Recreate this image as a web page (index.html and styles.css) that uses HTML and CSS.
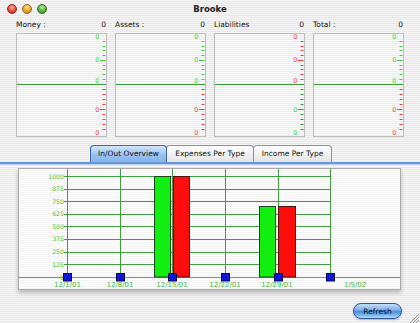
FILE: index.html
```html
<!DOCTYPE html>
<html>
<head>
	<title>Brooke</title>
	<link rel="stylesheet" href="styles.css">
</head>
<body>
	<div class="window">
		<div class="titlebar">
			<div class="lights">
				<span class="light close"></span>
				<span class="light min"></span>
				<span class="light zoom"></span>
			</div>
			<div class="title">Brooke</div>
			<div></div>
		</div>

		<div class="summary">
			<div class="account">
				<div class="account-head"><span>Money :</span><span>0</span></div>
				<div class="gauge">
					<svg viewBox="0 0 89 102" width="89" height="102">
						<line class="midline" x1="0" y1="50.5" x2="89" y2="50.5"/>
						<path class="tick-pos" d="M85.5 7.5h3M85.5 12.5h3M85.5 16.5h3M85.5 21.5h3M83 26.5h5.5M85.5 31.5h3M85.5 35.5h3M85.5 40.5h3M85.5 45.5h3"/>
						<path class="tick-neg" d="M85.5 55.5h3M85.5 60.5h3M85.5 65.5h3M85.5 70.5h3M83 75.5h5.5M85.5 80.5h3M85.5 85.5h3M85.5 90.5h3M85.5 95.5h3"/>
						<text class="num-pos" x="82.5" y="5">0</text>
						<text class="num-pos" x="82.5" y="28">0</text>
						<text class="num-pos" x="82.5" y="49.3">0</text>
						<text class="num-neg" x="82.5" y="77.7">0</text>
						<text class="num-neg" x="82.5" y="100.5">0</text>
					</svg>
				</div>
			</div>
			<div class="account">
				<div class="account-head"><span>Assets :</span><span>0</span></div>
				<div class="gauge">
					<svg viewBox="0 0 89 102" width="89" height="102">
						<line class="midline" x1="0" y1="50.5" x2="89" y2="50.5"/>
						<path class="tick-pos" d="M85.5 7.5h3M85.5 12.5h3M85.5 16.5h3M85.5 21.5h3M83 26.5h5.5M85.5 31.5h3M85.5 35.5h3M85.5 40.5h3M85.5 45.5h3"/>
						<path class="tick-neg" d="M85.5 55.5h3M85.5 60.5h3M85.5 65.5h3M85.5 70.5h3M83 75.5h5.5M85.5 80.5h3M85.5 85.5h3M85.5 90.5h3M85.5 95.5h3"/>
						<text class="num-pos" x="82.5" y="5">0</text>
						<text class="num-pos" x="82.5" y="28">0</text>
						<text class="num-pos" x="82.5" y="49.3">0</text>
						<text class="num-neg" x="82.5" y="77.7">0</text>
						<text class="num-neg" x="82.5" y="100.5">0</text>
					</svg>
				</div>
			</div>
			<div class="account">
				<div class="account-head"><span>Liabilities</span><span>0</span></div>
				<div class="gauge">
					<svg viewBox="0 0 89 102" width="89" height="102">
						<line class="midline" x1="0" y1="50.5" x2="89" y2="50.5"/>
						<path class="tick-neg" d="M85.5 7.5h3M85.5 12.5h3M85.5 16.5h3M85.5 21.5h3M83 26.5h5.5M85.5 31.5h3M85.5 35.5h3M85.5 40.5h3M85.5 45.5h3"/>
						<path class="tick-dark" d="M85.5 55.5h3M85.5 60.5h3M85.5 65.5h3M85.5 70.5h3M83 75.5h5.5M85.5 80.5h3M85.5 85.5h3M85.5 90.5h3M85.5 95.5h3"/>
						<text class="num-neg" x="82.5" y="5">0</text>
						<text class="num-neg" x="82.5" y="28">0</text>
						<text class="num-neg" x="82.5" y="49.3">0</text>
						<text class="num-pos" x="82.5" y="77.7">0</text>
						<text class="num-pos" x="82.5" y="100.5">0</text>
					</svg>
				</div>
			</div>
			<div class="account">
				<div class="account-head"><span>Total :</span><span>0</span></div>
				<div class="gauge">
					<svg viewBox="0 0 89 102" width="89" height="102">
						<line class="midline" x1="0" y1="50.5" x2="89" y2="50.5"/>
						<path class="tick-pos" d="M85.5 7.5h3M85.5 12.5h3M85.5 16.5h3M85.5 21.5h3M83 26.5h5.5M85.5 31.5h3M85.5 35.5h3M85.5 40.5h3M85.5 45.5h3"/>
						<path class="tick-neg" d="M85.5 55.5h3M85.5 60.5h3M85.5 65.5h3M85.5 70.5h3M83 75.5h5.5M85.5 80.5h3M85.5 85.5h3M85.5 90.5h3M85.5 95.5h3"/>
						<text class="num-pos" x="82.5" y="5">0</text>
						<text class="num-pos" x="82.5" y="28">0</text>
						<text class="num-pos" x="82.5" y="49.3">0</text>
						<text class="num-neg" x="82.5" y="77.7">0</text>
						<text class="num-neg" x="82.5" y="100.5">0</text>
					</svg>
				</div>
			</div>
		</div>

		<div class="tabs">
			<div class="tab selected">In/Out Overview</div>
			<div class="tab">Expenses Per Type</div>
			<div class="tab">Income Per Type</div>
		</div>
		<div class="tab-line"></div>

		<div class="tab-panel">
			<div class="chart">
				<!-- viewBox uses page coordinates so the grid reads like the screenshot -->
				<svg viewBox="19 169 381 120" width="381" height="120">
					<g class="grid">
						<path d="M64 176.5H330M64 189.5H330M64 201.5H330M64 214.5H330M64 226.5H330M64 239.5H330M64 252.5H330M64 264.5H330"/>
						<path d="M67.5 169V277M120.5 169V277M172.5 169V277M225.5 169V277M278.5 169V277M330.5 169V277"/>
					</g>
					<line class="base-side" x1="19" y1="277.5" x2="67" y2="277.5"/>
					<line class="base" x1="67" y1="277.5" x2="330" y2="277.5"/>
					<line class="base-side" x1="330" y1="277.5" x2="400" y2="277.5"/>

					<g class="ylabels">
						<text x="64" y="178.5">1000</text>
						<text x="64" y="191.2">875</text>
						<text x="64" y="203.5">750</text>
						<text x="64" y="216.2">625</text>
						<text x="64" y="228.5">500</text>
						<text x="64" y="241.2">375</text>
						<text x="64" y="254">250</text>
						<text x="64" y="266.5">125</text>
						<text x="64" y="279.5">0</text>
					</g>

					<rect class="bar-in" x="154.5" y="176.5" width="16" height="100.5"/>
					<rect class="bar-out" x="173.5" y="176.5" width="16" height="100.5"/>
					<rect class="bar-in" x="259.5" y="206.5" width="16" height="70.5"/>
					<rect class="bar-out" x="278.5" y="206.5" width="17" height="70.5"/>

					<g class="marker">
						<rect x="63.5" y="273.5" width="8" height="7.5"/>
						<rect x="116.5" y="273.5" width="8" height="7.5"/>
						<rect x="168.5" y="273.5" width="8" height="7.5"/>
						<rect x="221.5" y="273.5" width="8" height="7.5"/>
						<rect x="274.5" y="273.5" width="8" height="7.5"/>
						<rect x="326.5" y="273.5" width="8" height="7.5"/>
					</g>

					<g class="xlabels">
						<text x="67.5" y="287">12/1/01</text>
						<text x="120" y="287">12/8/01</text>
						<text x="172" y="287">12/15/01</text>
						<text x="225" y="287">12/22/01</text>
						<text x="277" y="287">12/29/01</text>
						<text x="355" y="287">1/5/02</text>
					</g>
				</svg>
			</div>
		</div>

		<div class="footer">
			<button class="refresh">Refresh</button>
			<svg class="grip" viewBox="0 0 9 10" width="9" height="10">
				<path d="M9 1L0 10M9 4L3 10M9 7L6 10"/>
			</svg>
		</div>
	</div>
</body>
</html>
```

FILE: styles.css
```css
body {
	margin: 0;
	padding: 0;
	font-family: 'DejaVu Sans', Verdana, sans-serif;
	font-size: 7.5px;
	color: #111;
}
.window {
	width: 420px;
	height: 323px;
	overflow: hidden;
	background: repeating-linear-gradient(#f6f6f6 0, #f6f6f6 1px, #e8e8e8 1px, #e8e8e8 2px);
}
.titlebar {
	height: 17px;
	display: grid;
	grid-template-columns: 1fr auto 1fr;
	align-items: center;
}
.lights {
	display: flex;
	gap: 5px;
	padding-left: 7px;
}
.light {
	width: 10px;
	height: 10px;
	border-radius: 50%;
	box-sizing: border-box;
}
.light.close {
	background: radial-gradient(circle at 50% 30%, #ffb9b0 0, #e8564a 45%, #b8231a 100%);
	border: 1px solid #8e2a22;
}
.light.min {
	background: radial-gradient(circle at 50% 30%, #ffe6a8 0, #f0ae2c 45%, #c27a10 100%);
	border: 1px solid #95651a;
}
.light.zoom {
	background: radial-gradient(circle at 50% 30%, #c8f0a8 0, #62b944 45%, #2f8a1e 100%);
	border: 1px solid #2d6b20;
}
.title {
	font-weight: bold;
	font-size: 8.5px;
	color: #222;
}
.summary {
	display: grid;
	grid-template-columns: repeat(4, 91px);
	column-gap: 8px;
	padding-left: 16px;
}
.account-head {
	height: 14px;
	display: flex;
	justify-content: space-between;
	align-items: center;
	padding-right: 1px;
}
.gauge {
	margin-top: 2px;
	height: 104px;
	box-sizing: border-box;
	border: 1px solid #bcbcbc;
	background: repeating-linear-gradient(#fbfbfb 0, #fbfbfb 1px, #ececec 1px, #ececec 2px);
}
.gauge svg {
	display: block;
}
.gauge text {
	font-family: 'DejaVu Sans', sans-serif;
	font-size: 6.5px;
	text-anchor: end;
}
.midline {
	stroke: #3d9e3d;
	stroke-width: 1;
}
.tick-pos {
	stroke: #45cc45;
	stroke-width: 1;
}
.tick-neg {
	stroke: #ee4040;
	stroke-width: 1;
}
.tick-dark {
	stroke: #2e962e;
	stroke-width: 1;
}
.num-pos {
	fill: #3fd63f;
}
.num-neg {
	fill: #f24848;
}
.tabs {
	margin-top: 8px;
	height: 17px;
	display: flex;
	padding-left: 90px;
}
.tab {
	box-sizing: border-box;
	height: 17px;
	line-height: 16px;
	text-align: center;
	border: 1px solid #909090;
	border-bottom: none;
	border-radius: 4px 4px 0 0;
	background: linear-gradient(#ffffff, #e4e4e4);
	color: #111;
	white-space: nowrap;
}
.tab:nth-child(1) {
	width: 77px;
}
.tab:nth-child(2) {
	width: 88px;
	margin-left: -1px;
}
.tab:nth-child(3) {
	width: 79px;
	margin-left: -1px;
}
.tab.selected {
	border-color: #3a66aa;
	background: linear-gradient(#d2e6fb, #98c2ef 55%, #86b5ea);
	position: relative;
	z-index: 1;
}
.tab-line {
	height: 2px;
	background: #6a95d4;
	border-bottom: 1px solid #bcd0ee;
}
.tab-panel {
	padding: 3px 0 0 18px;
}
.chart {
	width: 383px;
	height: 122px;
	box-sizing: border-box;
	border: 1px solid #a9a9a9;
	background: repeating-linear-gradient(#ffffff 0, #ffffff 1px, #f3f3f3 1px, #f3f3f3 2px);
	box-shadow: 0 3px 4px rgba(0, 0, 0, 0.22);
}
.chart svg {
	display: block;
}
.grid path {
	stroke: #3f9f3f;
	stroke-width: 1;
	fill: none;
}
.base {
	stroke: #8585e0;
	stroke-width: 1;
}
.base-side {
	stroke: #5aa85a;
	stroke-width: 1;
}
.ylabels text {
	font-family: 'DejaVu Sans', sans-serif;
	font-size: 6.2px;
	fill: #33cc33;
	text-anchor: end;
}
.xlabels text {
	font-family: 'DejaVu Sans', sans-serif;
	font-size: 7px;
	fill: #3cb83c;
	text-anchor: middle;
}
.bar-in {
	fill: #12ee12;
	stroke: #154a15;
	stroke-width: 1;
}
.bar-out {
	fill: #ff0c0c;
	stroke: #4f1010;
	stroke-width: 1;
}
.marker rect {
	fill: #1414d8;
	stroke: #0a0a55;
	stroke-width: 1;
}
.footer {
	display: flex;
	justify-content: flex-end;
	align-items: flex-start;
	padding-top: 13px;
	padding-right: 1px;
}
.refresh {
	width: 49px;
	height: 16px;
	margin: 0 8px 0 0;
	padding: 0;
	border: 1px solid #2f5595;
	border-radius: 8px;
	background: linear-gradient(#c4dffa 0%, #7fb3ec 40%, #4d8ee0 55%, #79b6f0 80%, #b5dcfb 100%);
	font-family: 'DejaVu Sans', sans-serif;
	font-size: 7.5px;
	color: #0b0b0b;
	box-shadow: 0 1px 2px rgba(0, 0, 0, 0.25);
}
.grip {
	margin-top: 10px;
}
.grip path {
	stroke: #8a8a8a;
	stroke-width: 1;
	fill: none;
}
```
